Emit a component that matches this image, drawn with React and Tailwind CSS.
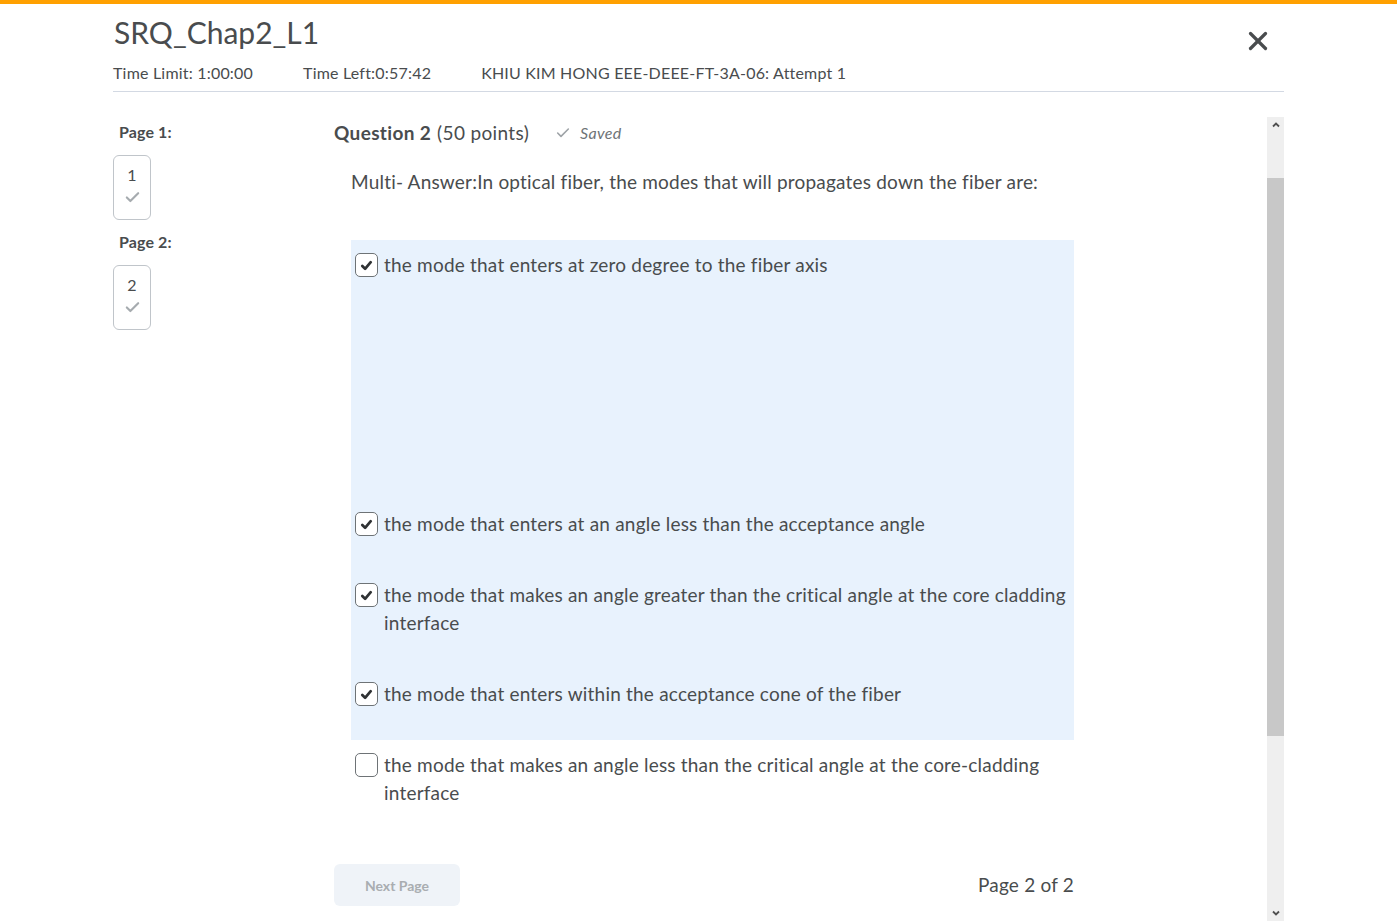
import { Check, X } from 'lucide-react'

const OPTIONS = [
  { text: 'the mode that enters at zero degree to the fiber axis', checked: true, tall: true },
  { text: 'the mode that enters at an angle less than the acceptance angle', checked: true },
  { text: 'the mode that makes an angle greater than the critical angle at the core cladding interface', checked: true },
  { text: 'the mode that enters within the acceptance cone of the fiber', checked: true },
  { text: 'the mode that makes an angle less than the critical angle at the core-cladding interface', checked: false },
]

function Box({ checked }) {
  return (
    <div className="w-[23px] h-[24px] mt-[2px] shrink-0 rounded-[5px] border border-[#6e7376] bg-white flex items-center justify-center">
      {checked && (
        <svg className="w-[15px] h-[15px]" viewBox="0 0 16 16" fill="none" stroke="#2f3234" strokeWidth={2.9} strokeLinecap="round" strokeLinejoin="round">
          <path d="M3.5 8.5l3 3 6-7" />
        </svg>
      )}
    </div>
  )
}

function Option({ text, checked, tall }) {
  return (
    <div className="pt-[11px] pb-[32px] pl-[4px] pr-[4px]">
      <div className="flex gap-[6px] items-start">
        <Box checked={checked} />
        <p className="text-[19px] tracking-[0.2px] leading-[28px] text-[#494c4e]">{text}</p>
      </div>
      {tall && <div className="h-[188px]" />}
    </div>
  )
}

function PageNav({ label, num }) {
  return (
    <div>
      <p className="pl-[6px] text-[16px] tracking-[0.1px] font-bold text-[#494c4e] leading-[22px]">{label}</p>
      <div className="mt-[12px] w-[38px] h-[65px] rounded-[6px] border border-[#c0c5ca] flex flex-col items-center pt-[9px]">
        <span className="text-[16px] text-[#494c4e] leading-[20px]">{num}</span>
        <Check className="w-[17px] h-[17px] mt-[4px] text-[#a6abaf]" strokeWidth={3} />
      </div>
    </div>
  )
}

export default function App() {
  const selected = OPTIONS.filter((o) => o.checked)
  const rest = OPTIONS.filter((o) => !o.checked)
  return (
    <div className="h-[921px] overflow-hidden bg-white text-[#494c4e]" style={{ fontFamily: 'Lato, "Open Sans", sans-serif' }}>
      <div className="h-[4px] bg-[#ffa000]" />
      <div className="mx-[113px]">
        <div className="flex items-start justify-between">
          <div>
            <h1 className="text-[30px] leading-[36px] mt-[10px] pl-[1px] text-[#494c4e]">SRQ_Chap2_L1</h1>
            <div className="flex gap-[50px] text-[16px] tracking-[0.2px] leading-[22px] mt-[12px]">
              <span>Time Limit: 1:00:00</span>
              <span>Time Left:0:57:42</span>
              <span>KHIU KIM HONG EEE-DEEE-FT-3A-06: Attempt 1</span>
            </div>
          </div>
          <X className="w-[30px] h-[30px] mt-[22px] mr-[11px] text-[#494c4e]" strokeWidth={2.6} />
        </div>
        <div className="mt-[7px] h-px bg-[#d3d9e3]" />

        <div className="flex">
          <div className="w-[221px] shrink-0 pt-[29px] flex flex-col gap-[11px]">
            <PageNav label="Page 1:" num="1" />
            <PageNav label="Page 2:" num="2" />
          </div>

          <div className="flex-1 pt-[29px]">
            <div className="flex items-center">
              <span className="text-[19px] tracking-[0.35px] leading-[24px] font-bold">Question 2</span>
              <span className="text-[19px] tracking-[0.35px] leading-[24px] ml-[6px]">(50 points)</span>
              <Check className="w-[16px] h-[16px] ml-[26px] text-[#9ea3a7]" strokeWidth={2.4} />
              <span className="ml-[9px] text-[16px] tracking-[0.3px] italic text-[#6e7376]">Saved</span>
            </div>
            <p className="ml-[17px] mt-[25px] text-[19px] tracking-[0.2px] leading-[24px]">
              Multi- Answer:In optical fiber, the modes that will propagates down the fiber are:
            </p>
            <div className="ml-[17px] w-[723px] mt-[46px]">
              <div className="bg-[#e8f2fd]">
                {selected.map((o) => <Option key={o.text} {...o} />)}
              </div>
              {rest.map((o) => <Option key={o.text} {...o} />)}
            </div>
            <div className="w-[740px] flex items-center justify-between mt-[25px]">
              <button className="w-[126px] h-[42px] rounded-[6px] bg-[#eff3f8] text-[14px] font-bold text-[#a9adb1]">Next Page</button>
              <span className="text-[19px] tracking-[0.2px] text-[#494c4e]">Page 2 of 2</span>
            </div>
          </div>

          <div className="w-[17px] shrink-0 mt-[25px] h-[804px] bg-[#efefef] flex flex-col items-center">
            <svg className="w-[10px] h-[10px] mt-[3px]" viewBox="0 0 10 10" fill="none" stroke="#505050" strokeWidth={1.8}>
              <path d="M2 6.5l3-3 3 3" />
            </svg>
            <div className="w-full h-[558px] mt-[48px] bg-[#c8c8c8]" />
            <div className="flex-1" />
            <svg className="w-[10px] h-[10px] mb-[3px]" viewBox="0 0 10 10" fill="none" stroke="#505050" strokeWidth={1.8}>
              <path d="M2 3.5l3 3 3-3" />
            </svg>
          </div>
        </div>
      </div>
    </div>
  )
}
